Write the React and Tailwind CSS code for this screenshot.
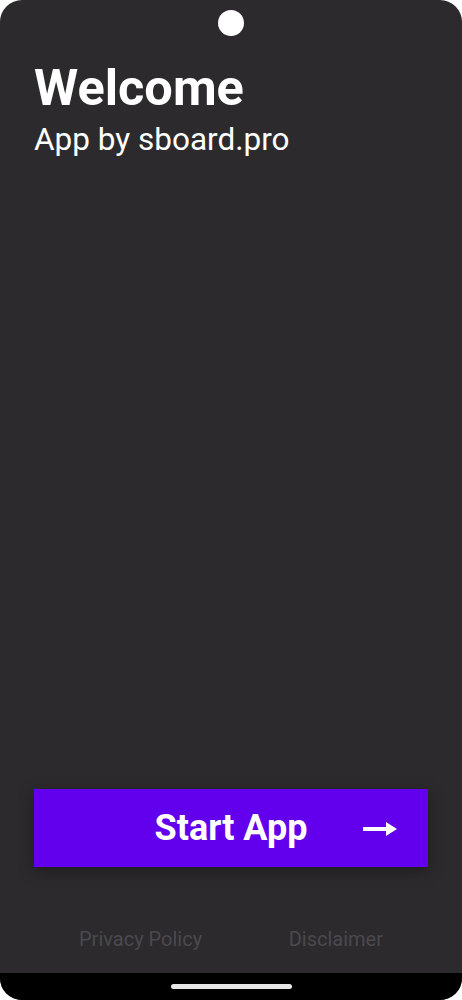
import React from "react";

const ArrowRight = () => (
  <svg width="36" height="20" viewBox="0 0 36 20" className="block">
    <path d="M1 10 H26" stroke="white" strokeWidth="4" />
    <path d="M24 3 L35 10 L24 17 Z" fill="white" />
  </svg>
);

export default function App() {
  return (
    <div className="w-[462px] h-[1000px] bg-white" style={{ fontFamily: "Roboto, 'Noto Sans', sans-serif" }}>
      <div className="flex flex-col w-full h-full rounded-[22px] overflow-hidden bg-[#2c2a2d]">
        {/* status area with camera */}
        <div className="flex justify-center pt-[10px] h-[36px]">
          <div className="w-[26px] h-[26px] rounded-full bg-white" />
        </div>

        {/* heading */}
        <div className="px-[34px] pt-[23px]">
          <h1 className="text-white font-bold text-[50.5px] leading-[58px]">Welcome</h1>
          <p className="text-white text-[31.5px] leading-[36px] mt-[5px]">App by sboard.pro</p>
        </div>

        <div className="flex-1" />

        {/* start button */}
        <div className="px-[34px]">
          <button className="relative flex items-center justify-center w-full h-[78px] bg-[#6200ee] shadow-[0_4px_14px_rgba(0,0,0,0.35)]">
            <span className="text-white font-bold text-[36px] leading-none">Start App</span>
            <span className="absolute right-[30px] top-[30px]">
              <ArrowRight />
            </span>
          </button>
        </div>

        {/* footer links */}
        <div className="flex justify-between px-[79px] pt-[60px] pb-[22px]">
          <span className="text-[#4b494d] text-[20px] leading-[24px]">Privacy Policy</span>
          <span className="text-[#4b494d] text-[20px] leading-[24px]">Disclaimer</span>
        </div>

        {/* nav bar */}
        <div className="flex justify-center items-center h-[27px] bg-black">
          <div className="w-[121px] h-[5px] rounded-full bg-[#e6e6e6]" />
        </div>
      </div>
    </div>
  );
}
